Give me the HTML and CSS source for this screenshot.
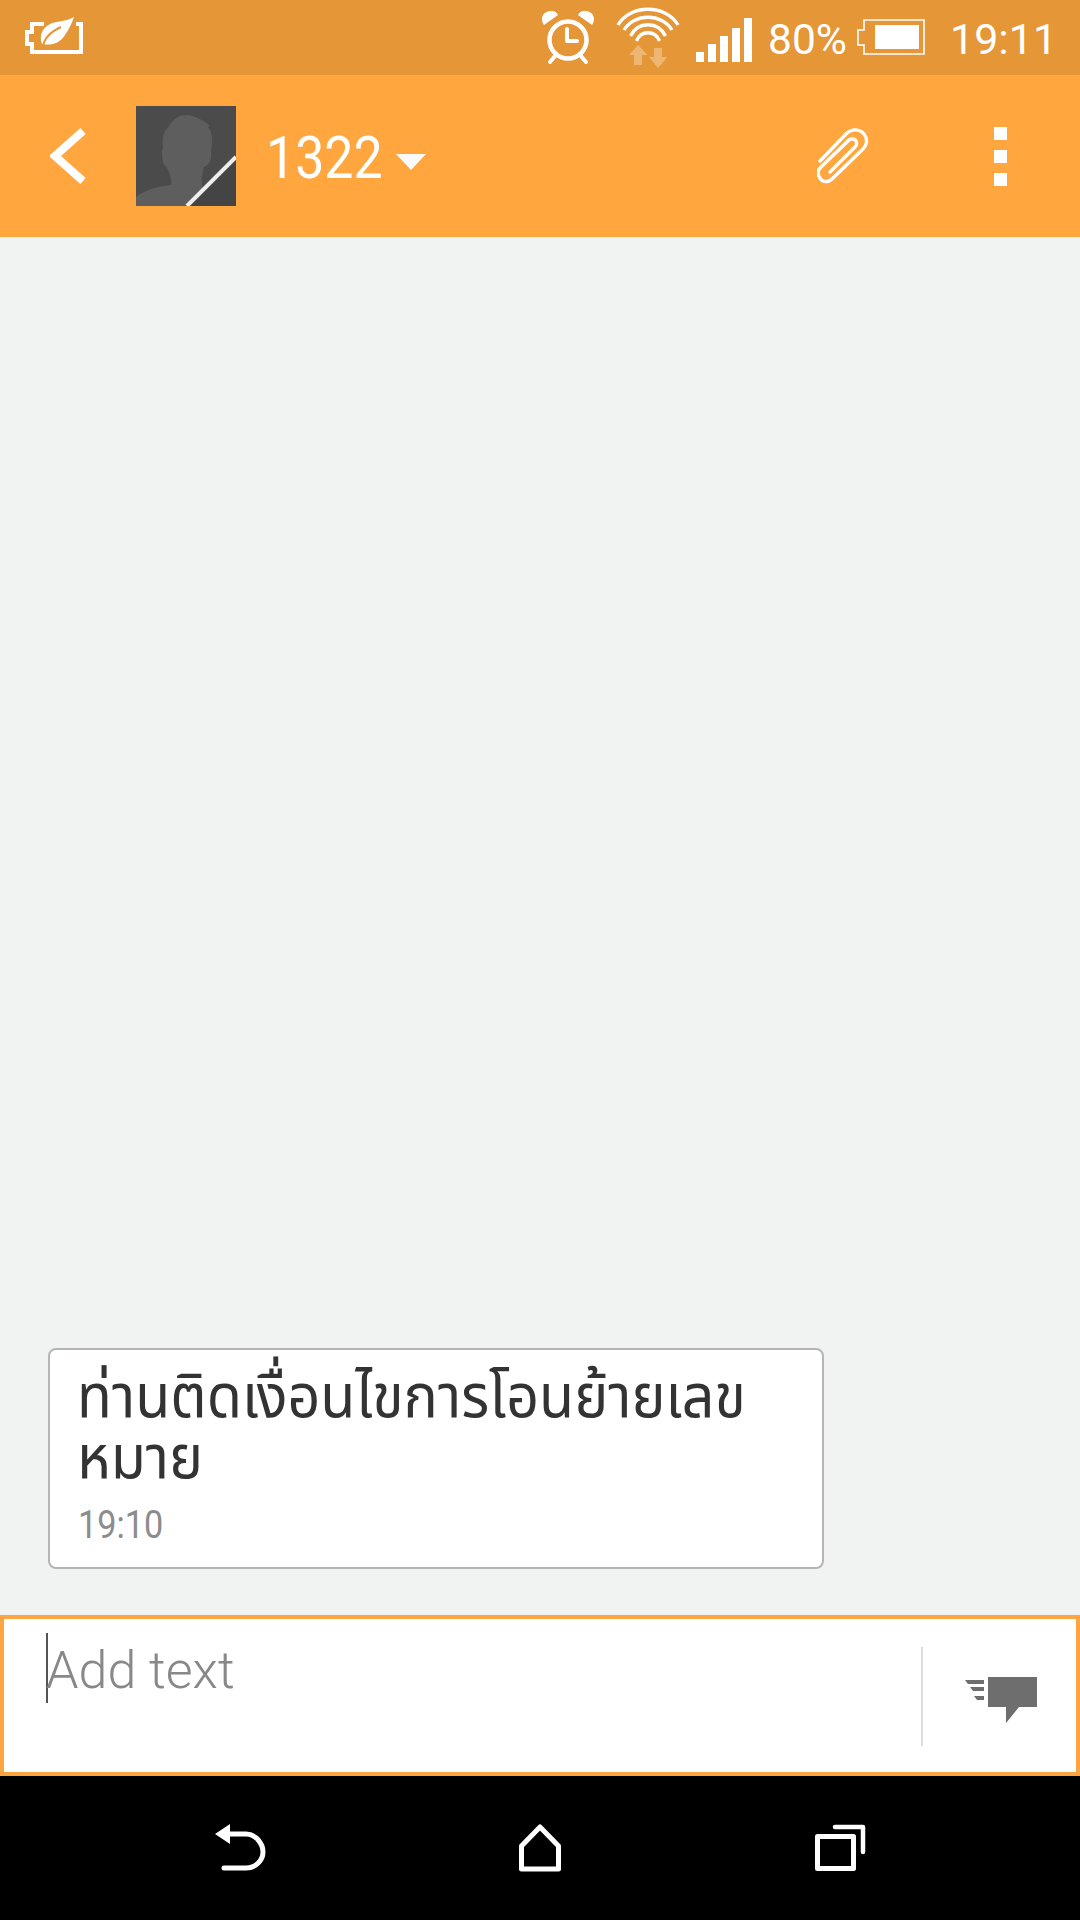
FILE: index.html
```html
<!DOCTYPE html>
<html lang="th">
<head>
<meta charset="utf-8">
<title>1322</title>
<link rel="stylesheet" href="styles.css">
</head>
<body>
<div class="app">
  <div class="status">
    <svg class="s-leaf" width="58" height="75" viewBox="25 0 58 75">
      <path class="ln" stroke-width="4" d="M44 24H32V32H27V44H32V52H81V24H76"/>
      <path class="wf" d="M74 17C66 22 56 21 50 24C42 28 39 36 42 44C52 46 60 43 65 35C69 29 72 23 74 17Z"/>
      <path class="sb" stroke-width="2" d="M43 47C44 38 50 32 61 27"/>
    </svg>
    <svg class="s-alarm" width="52" height="75" viewBox="542 0 52 75">
      <circle class="ln" stroke-width="4.500" cx="568" cy="40" r="18.500"/>
      <path class="ln rd" stroke-width="4" d="M567 29V41H577M555 56L550 62M581 56L586 62"/>
      <path class="wf" d="M544 25C539 18 544 10 552 11C555 11 557 13 558 15ZM592 25C597 18 592 10 584 11C581 11 579 13 578 15Z"/>
    </svg>
    <svg class="s-wifi" width="64" height="75" viewBox="616 0 64 75">
      <path class="ln" stroke-width="3.4" d="M618 25C630 4 666 4 678 25M624 30C634 13 662 13 672 30M630.500 36C638 21 658 21 665.500 36M636.500 41C641 30 655 30 659.500 41"/>
      <path class="arrow" d="M638 45L647.500 55H642V65H634V55H629ZM654 48H662V57H667.500L658 68L649 57H654Z"/>
    </svg>
    <svg class="s-signal" width="56" height="75" viewBox="696 0 56 75">
      <path class="wf" d="M696 52h8v10h-8zM708 44h8v18h-8zM720 36h8v26h-8zM732 28h8v34h-8zM744 18h8v44h-8z"/>
    </svg>
    <span class="s-pct">80%</span>
    <svg class="s-batt" width="68" height="75" viewBox="857 0 68 75">
      <path class="ln" stroke-width="1.600" d="M864 20H924V54H864V45H858V30H864Z"/>
      <rect class="wf" x="875" y="25" width="44" height="24"/>
    </svg>
    <span class="s-time">19:11</span>
  </div>

  <div class="header">
    <svg class="h-back" width="36" height="56" viewBox="50 128 36 56">
      <path class="ln" stroke-width="8" d="M83 131L55 156L83 181"/>
    </svg>
    <svg class="h-avatar" width="100" height="100" viewBox="0 0 100 100">
      <rect class="av-bg" width="100" height="100"/>
      <path class="av-fg" d="M0 100V91C10 83 24 80 35 79C36 72 33 66 30 60C27 59 26 54 26 46C26 42 27 44 27 41C26 32 27 26 33 20C38 12 44 9 50 9C57 9 66 13 74 20L72 21C76 26 77 32 75 46C76 54 73 59 68 61C66 68 65 73 66 79L66 100Z"/>
      <path class="av-dark" d="M100 52L52 100H100Z"/>
      <path class="av-line" d="M100 51L51 100"/>
    </svg>
    <span class="h-name">1322</span>
    <span class="h-caret"></span>
    <svg class="h-clip" width="52" height="56" viewBox="817 128 52 56">
      <path class="ln rd" stroke-width="3.400" d="M820 161L846 134C852 128 860 129 864 134C868 139 867 145 863 149L832 179C828 183 822 182 820 178C817 174 818 170 821 167L849 140C852 138 855 139 856 141C857 143 857 145 855 147L830 172"/>
    </svg>
    <div class="h-menu"><i></i><i></i><i></i></div>
  </div>

  <div class="thread">
    <div class="bubble">
      <p class="msg">ท่านติดเงื่อนไขการโอนย้ายเลข<br>หมาย</p>
      <span class="when">19:10</span>
    </div>
  </div>

  <div class="composer">
    <div class="field"><span class="hint">Add text</span></div>
    <div class="rule"></div>
    <svg class="send" width="72" height="46" viewBox="965 1677 72 46">
      <path class="gy" d="M988 1677H1037V1707H1019L1006 1723V1707H988ZM965 1680H984V1684H968ZM970 1687H984V1691H973ZM974 1696H984V1700H977Z"/>
    </svg>
  </div>

  <div class="nav">
    <svg class="n-back" width="52" height="48" viewBox="215 1824 52 48">
      <path class="wf" d="M230 1824V1844L215 1834Z"/>
      <path class="ln rd" stroke-width="5" d="M229 1834H246C256 1834 263 1844 263 1852C263 1860 256 1868 246 1868H224"/>
    </svg>
    <svg class="n-home" width="44" height="48" viewBox="518 1824 44 48">
      <path class="ln rdj" stroke-width="5" d="M540 1827L521.500 1846V1869H558.500V1846Z"/>
    </svg>
    <svg class="n-recent" width="52" height="48" viewBox="814 1824 52 48">
      <path class="ln rdj" stroke-width="5" d="M817.500 1836.500H853.500V1868.500H817.500Z"/>
      <path class="ln rd" stroke-width="4.500" d="M835 1827H863V1852"/>
    </svg>
  </div>
</div>
</body>
</html>
```
FILE: styles.css
```css
* { box-sizing: border-box; }
html, body { margin: 0; padding: 0; }
body { width: 1080px; height: 1920px; overflow: hidden; font-family: Roboto, "Noto Sans", sans-serif; background: #f1f3f2; }
.app { width: 1080px; height: 1920px; display: flex; flex-direction: column; }

svg { display: block; flex: none; }
.ln { fill: none; stroke: #fff; }
.rd { stroke-linecap: round; stroke-linejoin: round; }
.rdj { stroke-linejoin: round; }
.wf { fill: #fff; }
.sb { fill: none; stroke: #e59636; }
.gy { fill: #6e6e6e; }
.arrow { fill: #eeb573; }

.status { height: 75px; flex: none; background: #e59636; display: flex; align-items: center; color: #fff; }
.s-leaf { margin-left: 25px; }
.s-alarm { margin-left: 459px; }
.s-wifi { margin-left: 22px; }
.s-signal { margin-left: 16px; }
.s-pct { margin-left: 16px; width: 78px; font-size: 42.5px; font-weight: 400; line-height: 75px; margin-top: 3px; white-space: nowrap; }
.s-batt { margin-left: 11px; }
.s-time { margin-left: 25px; font-size: 43px; font-weight: 400; line-height: 75px; margin-top: 3px; white-space: nowrap; }

.header { height: 162px; flex: none; background: #ffa73e; display: flex; align-items: center; color: #fff; }
.h-back { margin-left: 50px; }
.h-avatar { margin-left: 50px; }
.av-bg { fill: #4b4b4b; }
.av-fg { fill: #5e5e5e; }
.av-dark { fill: #444; }
.av-line { fill: none; stroke: #eee; stroke-width: 4; }
.h-name { margin-left: 30px; margin-top: 4px; width: 115px; font-size: 60px; font-weight: 400; line-height: 60px; transform: scaleX(0.865); transform-origin: left center; white-space: nowrap; }
.h-caret { margin-left: 15px; margin-top: 12px; width: 0; height: 0; border-left: 15px solid transparent; border-right: 15px solid transparent; border-top: 16px solid #fafafa; }
.h-clip { margin-left: 391px; }
.h-menu { margin-left: 125px; display: flex; flex-direction: column; gap: 10px; }
.h-menu i { display: block; width: 13px; height: 13px; background: #fff; }

.thread { flex: 1; min-height: 0; display: flex; flex-direction: column; justify-content: flex-end; padding: 0 0 46px 48px; }
.bubble { width: 776px; height: 221px; background: #fff; border: 2px solid #b5b5b5; border-radius: 8px; padding: 0 28px; display: flex; flex-direction: column; align-items: flex-start; }
.msg { margin: 18px 0 0 -1px; font-family: "Noto Sans Thai", "Noto Sans", "DejaVu Sans", sans-serif; font-size: 60px; line-height: 61px; color: #333; white-space: nowrap; transform: scaleX(0.955); transform-origin: left center; }
.when { margin-top: 15px; font-size: 38px; line-height: 40px; color: #8c8c8c; transform: scaleX(0.9); transform-origin: left center; }

.composer { height: 161px; flex: none; background: #fff; border: 4px solid #ffa540; display: flex; align-items: flex-start; }
.field { width: 917px; padding: 14px 0 0 42px; }
.hint { display: block; height: 70px; border-left: 2px solid #555; font-size: 52px; font-weight: 300; line-height: 76px; text-indent: -2px; color: #888; white-space: nowrap; }
.rule { width: 2px; height: 99px; margin-top: 28px; background: #ddd; }
.send { margin: 58px 0 0 42px; }

.nav { height: 144px; flex: none; background: #000; display: flex; align-items: flex-start; padding-top: 48px; }
.n-back { margin-left: 215px; }
.n-home { margin-left: 251px; }
.n-recent { margin-left: 252px; }
```
